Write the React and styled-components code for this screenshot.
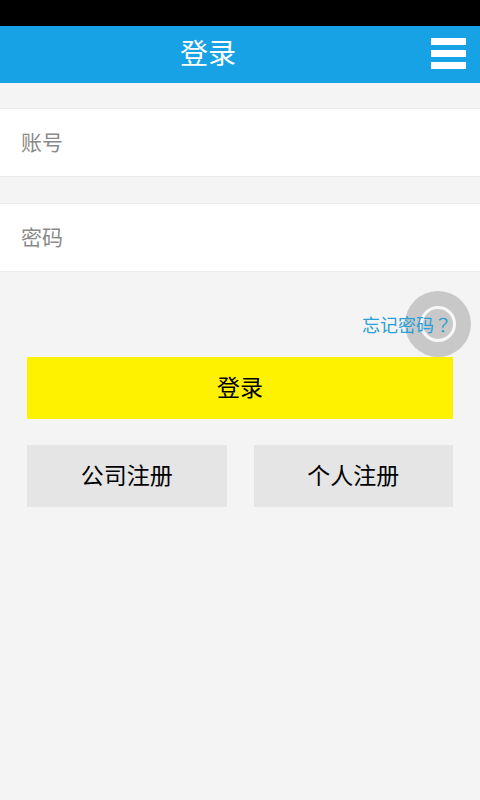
import styled, { createGlobalStyle } from 'styled-components';

const Global = createGlobalStyle`
    html, body {
        margin: 0;
        padding: 0;
        background: #f4f4f4;
        font-family: "Noto Sans CJK SC", "Noto Sans", sans-serif;
    }
`

const Page = styled.div`
    width: 480px;
    height: 800px;
    background: #f4f4f4;
    display: flex;
    flex-direction: column;
    position: relative;
    overflow: hidden;
`

const StatusBar = styled.div`
    height: 26px;
    background: #000;
`

const Header = styled.div`
    height: 57px;
    background: #17a2e6;
    display: flex;
    align-items: center;
    justify-content: space-between;
    padding: 0 14px 0 0;
    box-sizing: border-box;
`

const Title = styled.div`
    flex: 1;
    text-align: center;
    color: #fff;
    font-size: 28px;
    line-height: 1;
    padding-right: 15px;
    margin-top: -6px;
`

const MenuIcon = styled.div`
    width: 35px;
    display: flex;
    flex-direction: column;
    gap: 5px;
    margin-top: -3px;

    span {
        display: block;
        height: 7px;
        background: #fff;
    }
`

const Field = styled.div`
    height: 69px;
    margin-top: ${p => p.$top}px;
    background: #fff;
    border-top: 1px solid #ececec;
    border-bottom: 1px solid #ececec;
    box-sizing: border-box;
    display: flex;
    align-items: center;
    padding-left: 21px;
    color: #8a8a8a;
    font-size: 21px;
    line-height: 1;
    padding-bottom: 2px;
`

const ForgotRow = styled.div`
    position: relative;
    z-index: 1;
    display: flex;
    justify-content: flex-end;
    padding-right: 28px;
    margin-top: 40px;
    margin-bottom: 2px;
    height: 24px;
    align-items: center;
`

const Forgot = styled.span`
    color: #2a9fd6;
    font-family: "Noto Sans CJK TC", "Noto Sans CJK SC", sans-serif;
    font-size: 18px;
    line-height: 1;
`

const Actions = styled.div`
    padding: 0 27px;
    margin-top: 19px;
    display: flex;
    flex-direction: column;
    gap: 26px;
`

const Row = styled.div`
    display: flex;
    gap: 27px;

    & > * {
        flex: 1;
    }
`

const Button = styled.button`
    height: 62px;
    border: none;
    border-radius: 0;
    background: ${p => p.$primary ? '#fff200' : '#e5e5e5'};
    color: #000;
    font-family: "Noto Sans CJK SC", sans-serif;
    font-size: 23px;
    line-height: 1;
    padding: 0 0 3px;
    cursor: pointer;
`

const Float = styled.div`
    position: absolute;
    left: 405px;
    top: 291px;
    width: 66px;
    height: 66px;
    border-radius: 50%;
    background: rgba(170, 170, 170, 0.6);
    display: flex;
    align-items: center;
    justify-content: center;

    &::after {
        content: "";
        width: 30px;
        height: 30px;
        border-radius: 50%;
        border: 3px solid rgba(255, 255, 255, 0.85);
    }
`

export default function App() {
    return (
        <Page>
            <Global />
            <StatusBar />
            <Header>
                <Title>登录</Title>
                <MenuIcon><span /><span /><span /></MenuIcon>
            </Header>
            <Field $top={25}>账号</Field>
            <Field $top={26}>密码</Field>
            <Float />
            <ForgotRow><Forgot>忘记密码？</Forgot></ForgotRow>
            <Actions>
                <Button $primary>登录</Button>
                <Row>
                    <Button>公司注册</Button>
                    <Button>个人注册</Button>
                </Row>
            </Actions>
        </Page>
    );
}
